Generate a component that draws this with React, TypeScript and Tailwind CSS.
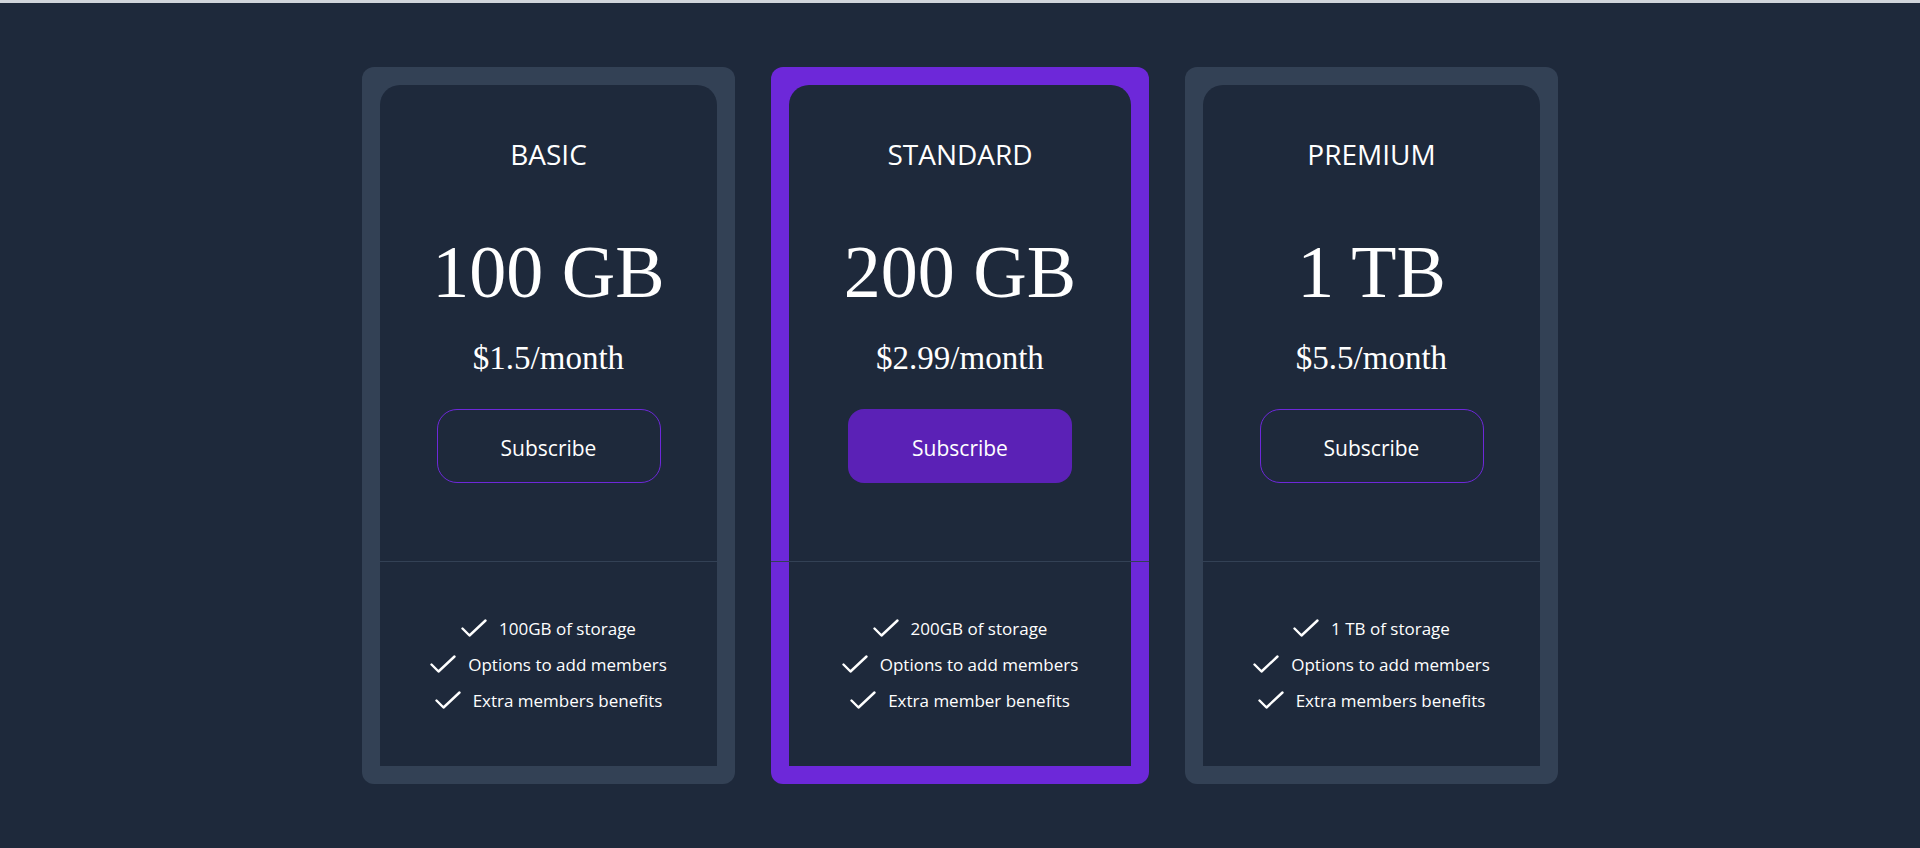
import React from "react";

type Plan = {
  name: string;
  size: string;
  price: string;
  features: string[];
  featured?: boolean;
};

const plans: Plan[] = [
  {
    name: "BASIC",
    size: "100 GB",
    price: "$1.5/month",
    features: ["100GB of storage", "Options to add members", "Extra members benefits"],
  },
  {
    name: "STANDARD",
    size: "200 GB",
    price: "$2.99/month",
    features: ["200GB of storage", "Options to add members", "Extra member benefits"],
    featured: true,
  },
  {
    name: "PREMIUM",
    size: "1 TB",
    price: "$5.5/month",
    features: ["1 TB of storage", "Options to add members", "Extra members benefits"],
  },
];

function CheckIcon() {
  return (
    <svg width="26" height="19" viewBox="0 0 26 19" fill="none" className="shrink-0">
      <polyline
        points="1.5,9.5 8.5,16.5 24.5,1.5"
        stroke="#ffffff"
        strokeWidth="2.4"
        strokeLinecap="round"
        strokeLinejoin="round"
      />
    </svg>
  );
}

function Card({ plan }: { plan: Plan }) {
  const featured = !!plan.featured;
  return (
    <div
      className={
        featured
          ? "w-[378px] h-[717px] rounded-[12px] bg-[#6d28d9] p-[18px] flex flex-col"
          : "w-[373px] h-[717px] rounded-[12px] bg-[#334155] p-[18px] flex flex-col"
      }
    >
      <div className="flex-1 flex flex-col bg-[#1e293b] rounded-t-[20px]">
        <div className="flex flex-col items-center pt-[50px] h-[476px]">
          <div className="font-['Open_Sans',sans-serif] text-[28px] leading-[38px] text-white">
            {plan.name}
          </div>
          <div className="mt-[62px] font-['Liberation_Serif',serif] text-[74px] leading-[74px] text-white">
            {plan.size}
          </div>
          <div className="mt-[29px] font-['Liberation_Serif',serif] text-[33px] leading-[40px] text-white">
            {plan.price}
          </div>
          <button
            className={
              featured
                ? "mt-[31px] w-[224px] h-[74px] pt-[5px] rounded-[16px] bg-[#5b21b6] text-white font-['Open_Sans',sans-serif] text-[21px]"
                : "mt-[31px] w-[224px] h-[74px] pt-[5px] rounded-[20px] border border-[#6d28d9] bg-transparent text-white font-['Open_Sans',sans-serif] text-[21px]"
            }
          >
            Subscribe
          </button>
        </div>
        <div className={featured ? "h-px bg-[#334155] -mx-[18px]" : "h-px bg-[#334155]"} />
        <div className="flex-1 flex flex-col items-center justify-center">
          {plan.features.map((f) => (
            <div key={f} className="flex items-center gap-[12px] h-[36px]">
              <CheckIcon />
              <span className="font-['Open_Sans',sans-serif] text-[17px] pt-[2px] text-white">{f}</span>
            </div>
          ))}
        </div>
      </div>
    </div>
  );
}

export default function App() {
  return (
    <div className="w-full h-[848px] bg-[#1e293b] flex flex-col">
      <div className="h-[3px] bg-[#d1d5db]" />
      <div className="flex-1 flex items-center justify-center gap-[36px]">
        {plans.map((p) => (
          <Card key={p.name} plan={p} />
        ))}
      </div>
    </div>
  );
}
